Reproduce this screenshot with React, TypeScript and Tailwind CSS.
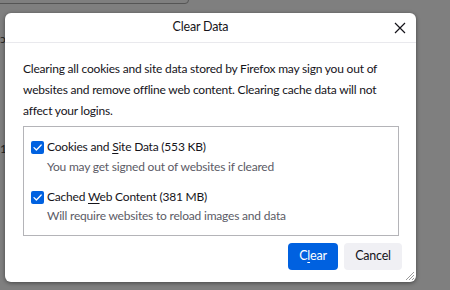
import React from "react";

const font = { fontFamily: 'Lato, "Noto Sans", sans-serif' };

function Check() {
  return (
    <span className="flex h-[13px] w-[13px] shrink-0 items-center justify-center rounded-[2px] bg-[#0061e0]">
      <svg width="11" height="11" viewBox="0 0 11 11" fill="none">
        <path d="M2 5.6 L4.4 8 L9.2 3" stroke="white" strokeWidth="1.3" strokeLinecap="round" strokeLinejoin="round" />
      </svg>
    </span>
  );
}

export default function App() {
  return (
    <div className="relative h-[290px] w-[450px] overflow-hidden bg-[#7f7f7f] tracking-[-0.2px]" style={font}>
      <div className="absolute left-[-10px] top-[-20px] h-[24px] w-[199px] rounded-[4px] border border-[#555]" />
      <div className="absolute left-0 top-[33px] text-[12px] leading-none text-[#222]">ɔ</div>
      <div className="absolute left-0 top-[143px] text-[12px] leading-none text-[#222]">1</div>

      <div className="absolute left-[5px] top-[13px] flex h-[269px] w-[411px] flex-col rounded-[6px] bg-white shadow-[0_1px_4px_rgba(0,0,0,0.45)]">
        <div className="relative flex h-[30px] items-center justify-center border-b border-[#e9e9ed] pr-[20px]">
          <span className="text-[12.5px] text-[#15141a]">Clear Data</span>
          <svg className="absolute right-[10px] top-[9px]" width="12" height="12" viewBox="0 0 12 12">
            <path d="M1 1 L11 11 M11 1 L1 11" stroke="#15141a" strokeWidth="1.2" />
          </svg>
        </div>
        <div className="flex flex-1 flex-col px-[18px] pt-[15px] text-[12px] text-[#15141a]">
          <p className="leading-[21px]">
            Clearing all cookies and site data stored by Firefox may sign you out of websites and remove offline web content. Clearing cache data will not affect your logins.
          </p>
          <div className="mt-[5px] flex h-[110px] w-[376px] flex-col border border-[#b4b4b8] px-[7px] pt-[10px]">
            <div className="flex items-center gap-[3px] leading-[20px]">
              <Check />
              <span>
                Cookies and <span className="underline underline-offset-2">S</span>ite Data (553 KB)
              </span>
            </div>
            <div className="pl-[16px] leading-[20px] text-[#5b5b66]">You may get signed out of websites if cleared</div>
            <div className="mt-[10px] flex items-center gap-[3px] leading-[20px]">
              <Check />
              <span>
                Cached <span className="underline underline-offset-2">W</span>eb Content (381 MB)
              </span>
            </div>
            <div className="pl-[16px] leading-[17px] text-[#5b5b66]">Will require websites to reload images and data</div>
          </div>
          <div className="mt-[7px] flex justify-end gap-[6px]">
            <button className="flex h-[27px] w-[50px] items-center justify-center rounded-[4px] bg-[#0061e0] text-[12.5px] text-white">
              C<span className="underline underline-offset-2">l</span>ear
            </button>
            <button className="mr-[-4px] flex h-[27px] w-[58px] items-center justify-center rounded-[4px] bg-[#f0f0f4] text-[12.5px] text-[#15141a]">
              Cancel
            </button>
          </div>
        </div>
        <svg className="absolute bottom-[1px] right-[1px]" width="11" height="11" viewBox="0 0 11 11">
          <path d="M10 2 L2 10 M10 5 L5 10 M10 8 L8 10" stroke="#9a9a9a" strokeWidth="1" />
        </svg>
      </div>
    </div>
  );
}
